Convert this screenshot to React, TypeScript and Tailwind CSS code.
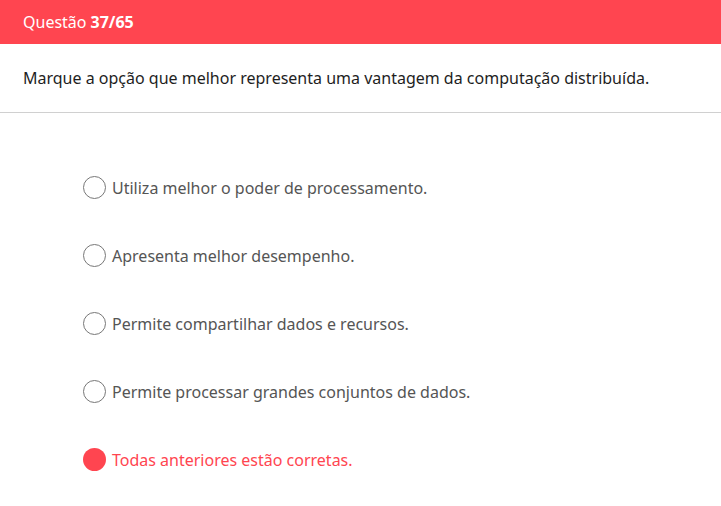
const options = [
  "Utiliza melhor o poder de processamento.",
  "Apresenta melhor desempenho.",
  "Permite compartilhar dados e recursos.",
  "Permite processar grandes conjuntos de dados.",
  "Todas anteriores estão corretas.",
];

const selected = 4;

export default function App() {
  return (
    <div className="w-[721px] h-[506px] bg-white font-['Noto_Sans',sans-serif]">
      {/* header */}
      <div className="h-[44px] bg-[#ff4550] flex items-center px-[23px] text-white text-[16px]">
        Questão <span className="font-bold ml-1">37/65</span>
      </div>

      {/* statement */}
      <div className="h-[69px] border-b border-[#d0d0d0] flex items-center px-[23px] text-[16px] text-[#1e1e1e]">
        Marque a opção que melhor representa uma vantagem da computação distribuída.
      </div>

      {/* options */}
      <div className="flex flex-col pt-[63px] pl-[83px] gap-[45px]">
        {options.map((opt, i) => (
          <label key={i} className="flex items-center h-[23px] cursor-pointer">
            {i === selected ? (
              <span className="w-[23px] h-[23px] rounded-full bg-[#ff4550]" />
            ) : (
              <span className="w-[23px] h-[23px] rounded-full border border-[#777]" />
            )}
            <span
              className={`ml-[6px] text-[16px] ${
                i === selected ? "text-[#ff4550]" : "text-[#555]"
              }`}
            >
              {opt}
            </span>
          </label>
        ))}
      </div>
    </div>
  );
}
